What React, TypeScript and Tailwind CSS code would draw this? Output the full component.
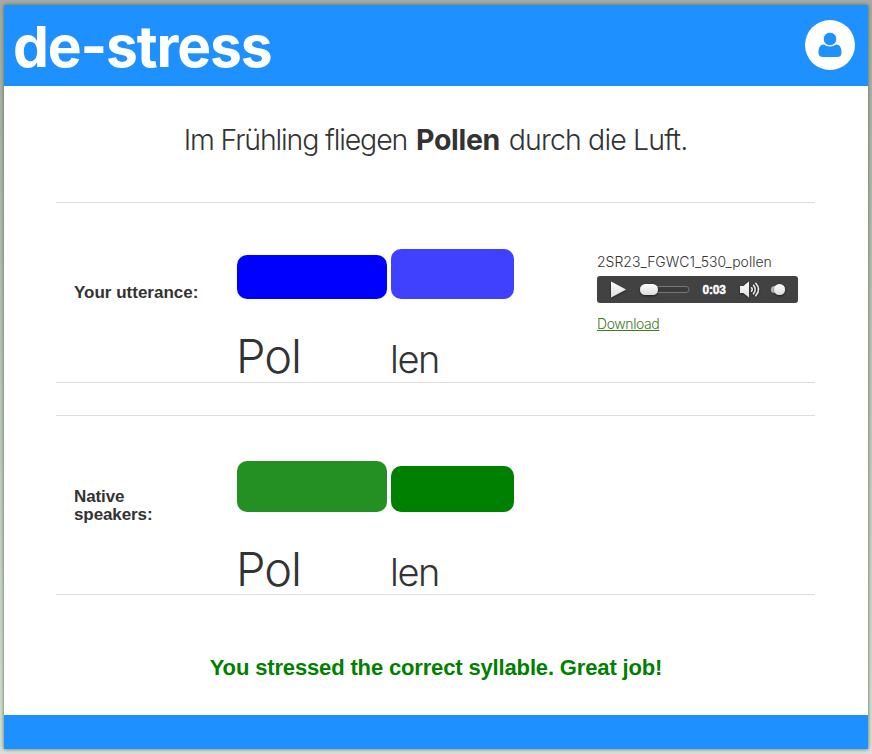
type Syllable = { text: string; bar: string; label: string };

const light = "font-['Inter','Helvetica_Neue','Liberation_Sans',sans-serif] font-light";

function Word({ syllables }: { syllables: Syllable[] }) {
  return (
    <div className="flex gap-1">
      {syllables.map((s) => (
        <div key={s.text} className="flex flex-col justify-end">
          <div className={`rounded-[10px] ${s.bar}`} />
          <div className={`flex items-end whitespace-nowrap ${light} ${s.label}`}>{s.text}</div>
        </div>
      ))}
    </div>
  );
}

function AudioPlayer() {
  return (
    <svg className="block h-[27px] w-[201px]" viewBox="0 0 201 27">
      <defs>
        <linearGradient id="knob" x1="0" y1="0" x2="0" y2="1">
          <stop offset="0" stopColor="#ffffff" />
          <stop offset="1" stopColor="#dcdcdc" />
        </linearGradient>
        <filter id="drop" x="-30%" y="-30%" width="160%" height="180%">
          <feDropShadow dx="0" dy="1" stdDeviation="1" floodColor="#000" floodOpacity="0.6" />
        </filter>
      </defs>
      <rect width="201" height="27" rx="3" fill="#424242" />
      <path d="M14 5.5 L29 13.5 L14 21.5 Z" fill="url(#knob)" filter="url(#drop)" />
      <rect x="44" y="10.5" width="48" height="6" rx="3" fill="#3b3b3b" stroke="#777" />
      <rect x="43" y="8" width="18" height="11" rx="5.5" fill="url(#knob)" filter="url(#drop)" />
      <text
        x="105.5"
        y="18"
        textLength="23.5"
        className="font-['Liberation_Sans',sans-serif] text-[12px] font-bold"
        fill="#fff"
        stroke="#fff"
        strokeWidth="0.4"
      >
        0:03
      </text>
      <g filter="url(#drop)">
        <path d="M143 10 H146.5 L152 5.5 V21.5 L146.5 17 H143 Z" fill="url(#knob)" />
        <g fill="none" stroke="#eee" strokeWidth="1.4" strokeLinecap="round">
          <path d="M154.5 11.8 Q156 13.5 154.5 15.2" />
          <path d="M156.5 9.3 Q160 13.5 156.5 17.7" />
          <path d="M158.7 7.3 Q164.5 13.5 158.7 19.7" />
        </g>
      </g>
      <rect x="174" y="10" width="14" height="7" rx="3.5" fill="#bdbdbd" />
      <circle cx="182.5" cy="13.5" r="5.5" fill="url(#knob)" filter="url(#drop)" />
    </svg>
  );
}

const utterance: Syllable[] = [
  { text: "Pol", bar: "h-11 w-[150px] bg-[#0000ff]", label: "mt-[27px] h-14 -ml-px text-[47px] leading-[52px] tracking-[-1px]" },
  { text: "len", bar: "h-[50px] w-[123px] bg-[#4040ff]", label: "mt-[27px] h-14 -ml-px text-[38px] leading-[46px] tracking-[-1.4px]" },
];

const native: Syllable[] = [
  { text: "Pol", bar: "h-[51px] w-[150px] bg-[#249024]", label: "mt-[26px] h-14 -ml-px text-[47px] leading-[50px] tracking-[-1px]" },
  { text: "len", bar: "h-[46px] w-[123px] bg-[#008000]", label: "mt-[26px] h-14 -ml-px text-[38px] leading-[44px] tracking-[-1.4px]" },
];

export default function App() {
  return (
    <div className="h-[754px] w-[872px] overflow-hidden bg-linear-to-b from-[#a9a9a9] to-[#dedede] pt-[5px] pl-1 font-['Liberation_Sans',sans-serif] text-[#333]">
      <div className="flex h-[744px] w-[864px] flex-col bg-white shadow-[0_0_4px_#3f7a32]">
        <header className="flex h-[81px] items-center justify-between bg-[#1e90ff] pr-[13px] pl-[9px]">
          <h1 className="pt-[2px] font-['Inter','Liberation_Sans',sans-serif] text-[57px] leading-[76px] font-bold tracking-[-1.15px] text-white">
            de-stress
          </h1>
          <div className="mb-px flex size-[50px] items-center justify-center rounded-full bg-white">
            <svg className="h-[26px] w-6" viewBox="0 0 24 26" fill="#1e90ff">
              <path d="M6 12.5 C2 12.5 .5 16 .5 20.5 Q.5 25 5 25 H19 Q23.5 25 23.5 20.5 C23.5 16 22 12.5 18 12.5 Q15.5 14.5 12 14.5 Q8.5 14.5 6 12.5 Z" />
              <circle cx="12" cy="7" r="6.7" stroke="#fff" strokeWidth="0.8" />
            </svg>
          </div>
        </header>

        <main className="flex h-[629px] flex-col px-[52px]">
          <p className={`flex h-[116px] w-[759px] justify-center pt-9 text-[28.5px] leading-9 whitespace-pre ${light}`}>
            <span className="tracking-[-1.15px]">Im Frühling fliegen </span>
            <b className="mr-[1.5px] ml-[2px] font-bold tracking-[-0.3px]">Pollen</b>
            <span className="tracking-[-0.85px]"> durch die Luft.</span>
          </p>

          <section className="flex h-[181px] w-[759px] border-y border-[#ddd]">
            <h2 className="w-[181px] pt-[81px] pl-[18px] text-[17px] leading-[18px] font-bold">Your utterance:</h2>
            <div className="flex w-[360px] items-end">
              <Word syllables={utterance} />
            </div>
            <div className={`pt-[49px] text-[14px] leading-5 whitespace-nowrap ${light}`}>
              <p className="mb-1">2SR23_FGWC1_530_pollen</p>
              <AudioPlayer />
              <a className="mt-[11px] block tracking-[-0.4px] text-[#3c7a1e] underline" href="#download">
                Download
              </a>
            </div>
          </section>

          <section className="mt-8 flex h-[180px] w-[759px] border-y border-[#ddd]">
            <h2 className="w-[181px] pt-[72px] pl-[18px] text-[17px] leading-[18px] font-bold tracking-[-0.1px]">
              Native
              <br />
              speakers:
            </h2>
            <div className="flex items-end">
              <Word syllables={native} />
            </div>
          </section>

          <p className="mt-[58px] text-center text-[22px] leading-[30px] font-bold tracking-[-0.15px] text-[#008000]">
            You stressed the correct syllable. Great job!
          </p>
        </main>

        <footer className="h-[34px] bg-[#1e90ff]" />
      </div>
    </div>
  );
}
